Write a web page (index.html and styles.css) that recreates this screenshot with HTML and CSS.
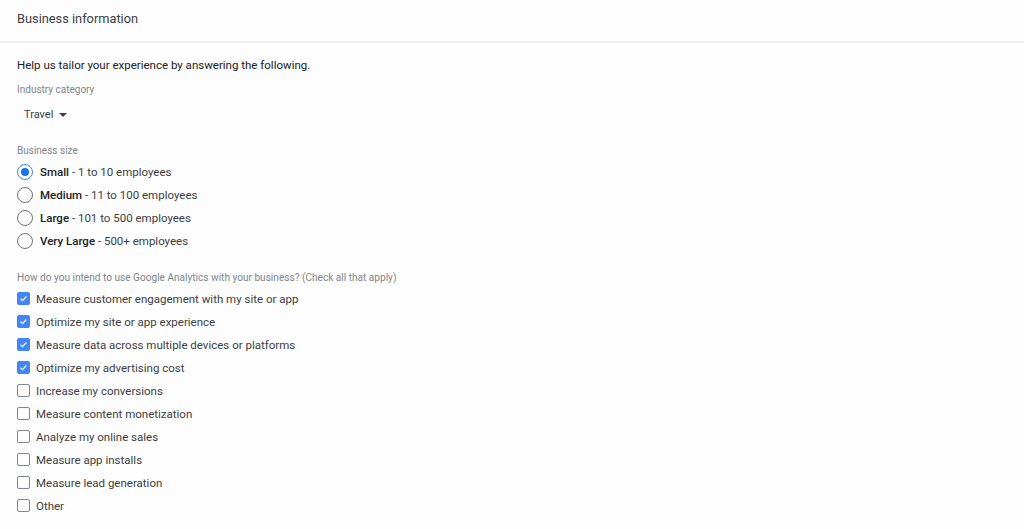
FILE: index.html
```html
<!DOCTYPE html>
<html lang="en">
<head>
    <meta charset="UTF-8">
    <title>Business information</title>
    <link rel="stylesheet" href="styles.css">
</head>
<body>
    <div class="header">Business information</div>
    <div class="content">
        <p class="intro">Help us tailor your experience by answering the following.</p>

        <div class="field-label">Industry category</div>
        <div class="dropdown">Travel <span class="caret"></span></div>

        <div class="field-label size-label">Business size</div>
        <div class="options">
            <label class="radio-row"><span class="radio checked"></span><b>Small</b>&nbsp;- 1 to 10 employees</label>
            <label class="radio-row"><span class="radio"></span><b>Medium</b>&nbsp;- 11 to 100 employees</label>
            <label class="radio-row"><span class="radio"></span><b>Large</b>&nbsp;- 101 to 500 employees</label>
            <label class="radio-row"><span class="radio"></span><b>Very Large</b>&nbsp;- 500+ employees</label>
        </div>

        <div class="field-label use-label">How do you intend to use Google Analytics with your business? (Check all that apply)</div>
        <div class="options">
            <label class="check-row"><span class="box checked"><svg viewBox="0 0 14 14"><path d="M3.2 7.2l2.5 2.5 5-5.2" /></svg></span>Measure customer engagement with my site or app</label>
            <label class="check-row"><span class="box checked"><svg viewBox="0 0 14 14"><path d="M3.2 7.2l2.5 2.5 5-5.2" /></svg></span>Optimize my site or app experience</label>
            <label class="check-row"><span class="box checked"><svg viewBox="0 0 14 14"><path d="M3.2 7.2l2.5 2.5 5-5.2" /></svg></span>Measure data across multiple devices or platforms</label>
            <label class="check-row"><span class="box checked"><svg viewBox="0 0 14 14"><path d="M3.2 7.2l2.5 2.5 5-5.2" /></svg></span>Optimize my advertising cost</label>
            <label class="check-row"><span class="box"></span>Increase my conversions</label>
            <label class="check-row"><span class="box"></span>Measure content monetization</label>
            <label class="check-row"><span class="box"></span>Analyze my online sales</label>
            <label class="check-row"><span class="box"></span>Measure app installs</label>
            <label class="check-row"><span class="box"></span>Measure lead generation</label>
            <label class="check-row"><span class="box"></span>Other</label>
        </div>
    </div>
</body>
</html>
```

FILE: styles.css
```css
body {
    font-family: Roboto, 'Liberation Sans', sans-serif;
    background: #fdfdfd;
    color: #3c4043;
    margin: 0;
}
.header {
    height: 41px;
    line-height: 38px;
    padding-left: 17px;
    font-size: 12.8px;
    color: #3c4043;
    border-bottom: 2px solid #efefef;
}
.content {
    padding: 13px 17px 0;
}
.intro {
    margin: 0;
    font-size: 11.5px;
    line-height: 18px;
    color: #202124;
}
.field-label {
    font-size: 10px;
    line-height: 14px;
    color: #80868b;
    margin-top: 9px;
}
.size-label {
    margin-top: 19px;
}
.use-label {
    margin-top: 19px;
    font-size: 10.1px;
}
.dropdown {
    display: flex;
    align-items: center;
    gap: 6px;
    margin-top: 8px;
    padding-left: 7px;
    font-size: 11px;
    line-height: 20px;
    color: #3c4043;
}
.caret {
    width: 0;
    height: 0;
    border-left: 4px solid transparent;
    border-right: 4px solid transparent;
    border-top: 4px solid #3c4043;
}
.options {
    margin-top: 2px;
    display: flex;
    flex-direction: column;
}
.radio-row, .check-row {
    display: flex;
    align-items: center;
    height: 23px;
    font-size: 11.5px;
    color: #3c4043;
}
.radio-row b {
    font-weight: 500;
    color: #202124;
}
.radio {
    box-sizing: border-box;
    width: 16px;
    height: 16px;
    border: 1.5px solid #6f7377;
    border-radius: 50%;
    margin-right: 7px;
    display: flex;
    align-items: center;
    justify-content: center;
}
.radio.checked {
    border-color: #4285f4;
}
.radio.checked::after {
    content: "";
    width: 8px;
    height: 8px;
    border-radius: 50%;
    background: #1a73e8;
}
.box {
    box-sizing: border-box;
    width: 13px;
    height: 13px;
    border: 1.5px solid #80868b;
    border-radius: 2px;
    margin-right: 6px;
    display: flex;
}
.box.checked {
    background: #4285f4;
    border-color: #4285f4;
}
.box svg {
    width: 100%;
    height: 100%;
    fill: none;
    stroke: #fff;
    stroke-width: 1.6;
}
```
